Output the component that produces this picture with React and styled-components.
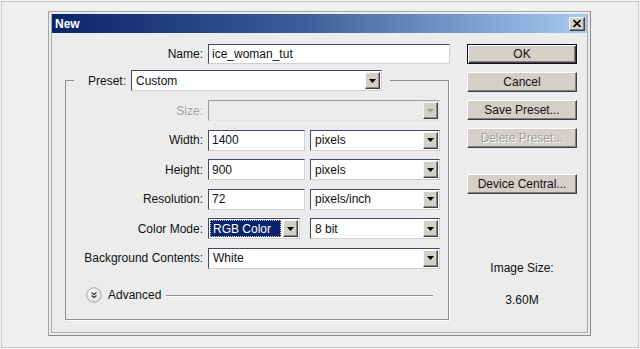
import styled, { createGlobalStyle, css } from 'styled-components'

const GlobalStyle = createGlobalStyle`
  html, body { margin: 0; padding: 0; background: #f3f3f3; }
  body { font-family: "Liberation Sans", Arial, sans-serif; font-size: 12px; color: #111; }
  * { box-sizing: border-box; }
`

const Page = styled.div`
  width: 638px;
  height: 347px;
  margin: 1px;
  border: 1px solid #cacaca;
  background: #f0f0f0;
  padding: 9px 0 0 46px;
`

const Window = styled.div`
  width: 543px;
  height: 325px;
  border: 1px solid #a6a6a6;
  border-right-color: #8a8a8a;
  border-bottom-color: #8a8a8a;
  padding: 2px;
  background: #ececec;
  display: flex;
`

const Frame = styled.div`
  flex: 1;
  border: 1px solid #ababab;
  border-top: 0;
  display: flex;
  flex-direction: column;
`

const TitleBar = styled.div`
  height: 19px;
  display: flex;
  align-items: center;
  justify-content: space-between;
  padding: 0 2px 0 3px;
  background: linear-gradient(to right, #0a246a 0%, #3a5a98 45%, #a6caf0 100%);
`

const Title = styled.span`
  color: #fff;
  font-weight: bold;
  font-size: 12px;
`

const CloseButton = styled.div`
  width: 16px;
  height: 14px;
  display: flex;
  align-items: center;
  justify-content: center;
  background: #d4d0c8;
  border: 1px solid;
  border-color: #fff #404040 #404040 #fff;
  box-shadow: inset -1px -1px 0 #808080;
`

const Body = styled.div`
  flex: 1;
  display: flex;
  padding-top: 11px;
`

const FormColumn = styled.div`
  width: 398px;
  display: flex;
  flex-direction: column;
`

const NameRow = styled.div`
  display: grid;
  grid-template-columns: 151px 242px;
  column-gap: 5px;
  align-items: center;
`

const Label = styled.label`
  text-align: right;
  white-space: nowrap;
  color: ${p => (p.$disabled ? '#a3a3a3' : '#111')};
`

const TextInput = styled.input`
  width: ${p => p.$w}px;
  height: ${p => p.$h || 21}px;
  font: inherit;
  color: #111;
  background: #fff;
  border: 1px solid;
  border-color: #3e4a66 #d0d0d0 #d0d0d0 #3e4a66;
  padding: 0 0 0 3px;
  outline: none;
`

const Group = styled.fieldset`
  width: 384px;
  margin: 6px 0 0 13px;
  padding: 0 0 16px 0;
  border: 1px solid #8f8f8f;
  box-shadow: 1px 1px 0 #fff;
`

const Legend = styled.legend`
  margin-left: 8px;
  padding: 0 8px 0 14px;
`

const LegendRow = styled.div`
  display: flex;
  align-items: center;
  gap: 5px;
  height: 21px;
`

const Fields = styled.div`
  display: grid;
  grid-template-columns: 137px 232px;
  grid-auto-rows: 21px;
  column-gap: 5px;
  row-gap: 8.5px;
  align-items: center;
  padding-top: 9px;
`

const Pair = styled.div`
  display: flex;
  justify-content: space-between;
`

const SelectBox = styled.div`
  width: ${p => p.$w}px;
  height: 21px;
  display: flex;
  padding: 1px;
  background: ${p => (p.$disabled ? '#ececec' : '#fff')};
  border: 1px solid;
  border-color: ${p =>
    p.$disabled ? '#9a9a9a #e4e4e4 #e4e4e4 #9a9a9a' : '#3e4a66 #d0d0d0 #d0d0d0 #3e4a66'};
`

const SelectValue = styled.div`
  flex: 1;
  display: flex;
  align-items: center;
  padding-left: 3px;
  margin-right: 2px;
  white-space: nowrap;
  ${p =>
    p.$active &&
    css`
      background: #0a246a;
      color: #fff;
      outline: 1px dotted #c8d0e8;
      outline-offset: -1px;
    `}
`

const ArrowButton = styled.div`
  width: 15px;
  display: flex;
  align-items: center;
  justify-content: center;
  background: #d4d0c8;
  border: 1px solid;
  border-color: #f6f6f6 #404040 #404040 #f6f6f6;
  box-shadow: inset -1px -1px 0 #8a8a8a;
`

const Advanced = styled.div`
  display: flex;
  align-items: center;
  gap: 6px;
  margin: 18.5px 15px 0 20px;
  height: 16px;
`

const Rule = styled.div`
  flex: 1;
  height: 1px;
  margin-left: -1px;
  background: #8f8f8f;
  box-shadow: 0 1px 0 #fff;
`

const ButtonColumn = styled.div`
  width: 110px;
  margin-left: 17px;
  display: flex;
  flex-direction: column;
  gap: 8px;
`

const Button = styled.div`
  height: 20px;
  display: flex;
  align-items: center;
  justify-content: center;
  background: #d4d0c8;
  color: ${p => (p.$disabled ? '#a0a0a0' : '#111')};
  text-shadow: ${p => (p.$disabled ? '1px 1px 0 #fff' : 'none')};
  border: 1px solid;
  border-color: #fff #404040 #404040 #fff;
  box-shadow: inset -1px -1px 0 #808080;
  margin-top: ${p => p.$gapTop || 0}px;
  ${p =>
    p.$default &&
    css`
      border-color: #111;
      box-shadow: inset 1px 1px 0 #fff, inset -1px -1px 0 #404040, inset -2px -2px 0 #808080;
    `}
`

const SizeInfo = styled.div`
  margin-top: 59px;
  text-align: center;
  line-height: 14px;
  color: #111;
`

const SizeValue = styled.div`
  margin-top: 10px;
  text-align: center;
  line-height: 14px;
  color: #111;
`

const Arrow = ({ disabled }) => (
  <svg width="7" height="4" viewBox="0 0 7 4">
    <polygon points="0,0 7,0 3.5,4" fill={disabled ? '#a0a0a0' : '#000'} />
  </svg>
)

const Select = ({ w, value, disabled, active }) => (
  <SelectBox $w={w} $disabled={disabled}>
    <SelectValue $active={active}>{value}</SelectValue>
    <ArrowButton>
      <Arrow disabled={disabled} />
    </ArrowButton>
  </SelectBox>
)

const AdvancedIcon = () => (
  <svg width="16" height="16" viewBox="0 0 16 16">
    <defs>
      <radialGradient id="adv" cx="40%" cy="35%" r="70%">
        <stop offset="0%" stopColor="#ffffff" />
        <stop offset="100%" stopColor="#dcdcdc" />
      </radialGradient>
    </defs>
    <circle cx="8" cy="8" r="7.3" fill="url(#adv)" stroke="#a9a9a9" strokeWidth="1" />
    <path d="M5.5 5.5 L8 7.5 L10.5 5.5 M5.5 8.5 L8 10.5 L10.5 8.5" fill="none" stroke="#2a2a2a" strokeWidth="1.2" />
  </svg>
)

export default function App() {
  return (
    <>
      <GlobalStyle />
      <Page>
        <Window>
          <Frame>
            <TitleBar>
              <Title>New</Title>
              <CloseButton>
                <svg width="8" height="7" viewBox="0 0 8 7">
                  <path d="M0.5 0 L7.5 7 M7.5 0 L0.5 7" stroke="#000" strokeWidth="1.6" />
                </svg>
              </CloseButton>
            </TitleBar>
            <Body>
              <FormColumn>
                <NameRow>
                  <Label>Name:</Label>
                  <TextInput $w={242} $h={20} readOnly value="ice_woman_tut" />
                </NameRow>
                <Group>
                  <Legend>
                    <LegendRow>
                      <Label>Preset:</Label>
                      <Select w={251} value="Custom" />
                    </LegendRow>
                  </Legend>
                  <Fields>
                    <Label $disabled>Size:</Label>
                    <Select w={232} value="" disabled />

                    <Label>Width:</Label>
                    <Pair>
                      <TextInput $w={97} readOnly value="1400" />
                      <Select w={130} value="pixels" />
                    </Pair>

                    <Label>Height:</Label>
                    <Pair>
                      <TextInput $w={97} readOnly value="900" />
                      <Select w={130} value="pixels" />
                    </Pair>

                    <Label>Resolution:</Label>
                    <Pair>
                      <TextInput $w={97} readOnly value="72" />
                      <Select w={130} value="pixels/inch" />
                    </Pair>

                    <Label>Color Mode:</Label>
                    <Pair>
                      <Select w={92} value="RGB Color" active />
                      <Select w={130} value="8 bit" />
                    </Pair>

                    <Label>Background Contents:</Label>
                    <Select w={232} value="White" />
                  </Fields>
                  <Advanced>
                    <AdvancedIcon />
                    <span>Advanced</span>
                    <Rule />
                  </Advanced>
                </Group>
              </FormColumn>
              <ButtonColumn>
                <Button $default>OK</Button>
                <Button>Cancel</Button>
                <Button>Save Preset...</Button>
                <Button $disabled>Delete Preset...</Button>
                <Button $gapTop={18}>Device Central...</Button>
                <SizeInfo>Image Size:</SizeInfo>
                <SizeValue>3.60M</SizeValue>
              </ButtonColumn>
            </Body>
          </Frame>
        </Window>
      </Page>
    </>
  )
}
